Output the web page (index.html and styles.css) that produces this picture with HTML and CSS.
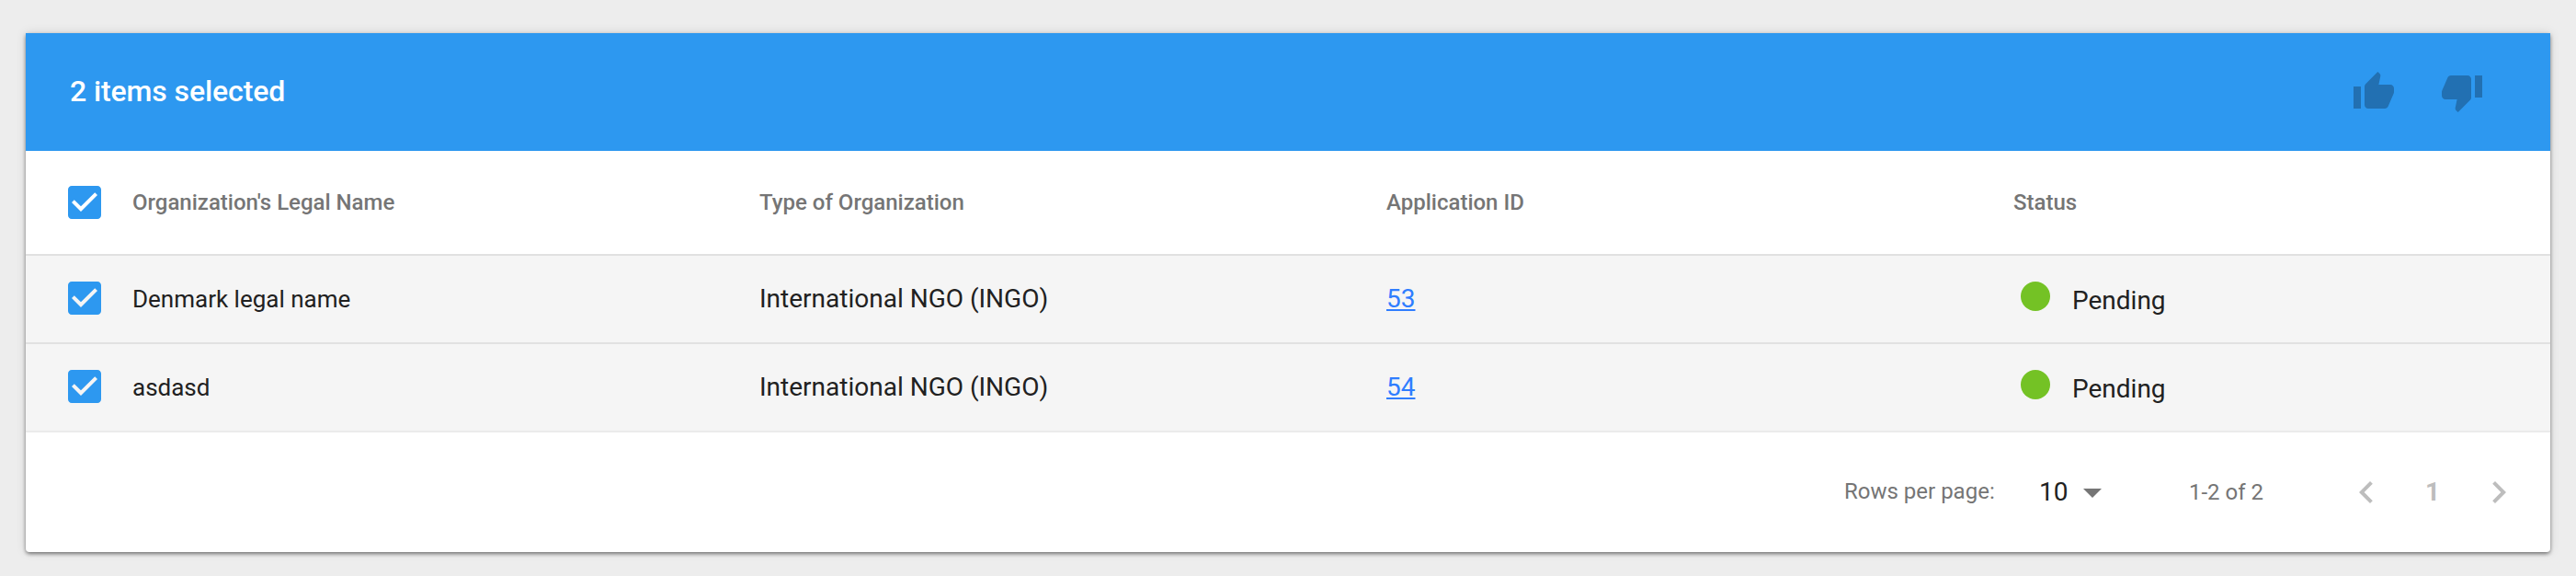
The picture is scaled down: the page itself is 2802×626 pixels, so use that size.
FILE: index.html
```html
<!DOCTYPE html>
<html lang="en">
<head>
<meta charset="utf-8">
<title>Applications</title>
<link rel="stylesheet" href="styles.css">
</head>
<body>
<svg class="defs" width="0" height="0">
  <symbol id="check" viewBox="0 0 24 24"><path d="M19 3H5c-1.11 0-2 .9-2 2v14c0 1.1.89 2 2 2h14c1.11 0 2-.9 2-2V5c0-1.1-.89-2-2-2zm-9 14l-5-5 1.41-1.41L10 14.17l7.59-7.59L19 8l-9 9z"/></symbol>
</svg>
<main class="card">
  <header class="toolbar">
    <h1 class="title">2 items selected</h1>
    <div class="actions">
      <svg class="icon" viewBox="0 0 24 24"><path d="M1 21h4V9H1v12zm22-11c0-1.1-.9-2-2-2h-6.31l.95-4.57.03-.32c0-.41-.17-.79-.44-1.06L14.17 1 7.59 7.59C7.22 7.95 7 8.45 7 9v10c0 1.1.9 2 2 2h9c.83 0 1.54-.5 1.84-1.22l3.02-7.05c.09-.23.14-.47.14-.73v-2z"/></svg>
      <svg class="icon" viewBox="0 0 24 24"><path d="M15 3H6c-.83 0-1.54.5-1.84 1.22l-3.02 7.05c-.09.23-.14.47-.14.73v2c0 1.1.9 2 2 2h6.31l-.95 4.57-.03.32c0 .41.17.79.44 1.06L9.83 23l6.59-6.59c.36-.36.58-.86.58-1.41V5c0-1.1-.9-2-2-2zm4 0v12h4V3h-4z"/></svg>
    </div>
  </header>
  <section class="table">
    <div class="row head">
      <div class="select"><svg class="icon check"><use href="#check"/></svg></div>
      <div class="cell">Organization's Legal Name</div>
      <div class="cell">Type of Organization</div>
      <div class="cell">Application ID</div>
      <div class="cell">Status</div>
    </div>
    <div class="row">
      <div class="select"><svg class="icon check"><use href="#check"/></svg></div>
      <div class="cell name">Denmark legal name</div>
      <div class="cell">International NGO (INGO)</div>
      <div class="cell"><a class="link" href="#">53</a></div>
      <div class="cell status"><span class="dot"></span><span class="label">Pending</span></div>
    </div>
    <div class="row last">
      <div class="select"><svg class="icon check"><use href="#check"/></svg></div>
      <div class="cell name">asdasd</div>
      <div class="cell">International NGO (INGO)</div>
      <div class="cell"><a class="link" href="#">54</a></div>
      <div class="cell status"><span class="dot"></span><span class="label">Pending</span></div>
    </div>
  </section>
  <footer class="footer">
    <span class="rows-label">Rows per page:</span>
    <span class="size">10</span>
    <svg class="icon caret" viewBox="0 0 24 24"><path d="M7 10l5 5 5-5z"/></svg>
    <span class="range">1-2 of 2</span>
    <svg class="icon nav" viewBox="0 0 24 24"><path d="M15.41 7.41L14 6l-6 6 6 6 1.41-1.41L10.83 12z"/></svg>
    <span class="page">1</span>
    <svg class="icon nav" viewBox="0 0 24 24"><path d="M10 6L8.59 7.41 13.17 12l-4.58 4.59L10 18l6-6z"/></svg>
  </footer>
</main>
</body>
</html>
```
FILE: styles.css
```css
* { box-sizing: border-box; }
body {
  margin: 0;
  padding: 36px 28px 26px;
  background: #ededed;
  font-family: Roboto, "Liberation Sans", sans-serif;
  color: #212121;
}
.defs { position: absolute; }
.card {
  height: 564px;
  background: #fff;
  border-radius: 0 0 4px 4px;
  box-shadow: 0 2px 4px -1px rgba(0,0,0,.4), 0 2px 4px rgba(0,0,0,.24), 0 0 12px rgba(0,0,0,.12);
}
.icon { width: 48px; height: 48px; flex: none; display: block; }
.toolbar {
  height: 128px;
  padding: 0 72px 0 48px;
  display: flex;
  align-items: center;
  justify-content: space-between;
  background: #2d98f0;
}
.title {
  margin: 0;
  padding-bottom: 2px;
  font-size: 32px;
  line-height: 40px;
  font-weight: 500;
  letter-spacing: -0.1px;
  color: #fff;
}
.actions { display: flex; gap: 48px; fill: #2270b2; }
.row {
  height: 96px;
  display: flex;
  align-items: center;
  background: #f5f5f5;
  border-bottom: 2px solid #e1e1e1;
  font-size: 28px;
  line-height: 32px;
}
.row.last { border-bottom-color: #ebebeb; }
.row.head {
  height: 114px;
  background: #fff;
  font-size: 24px;
  font-weight: 500;
  color: #757575;
}
.select { width: 116px; padding-left: 40px; flex: none; }
.row:not(.head) .select { padding-bottom: 2px; }
.check { fill: #2d98f0; }
.cell { width: 682px; flex: none; white-space: nowrap; }
.cell:last-child { width: auto; flex: 1; }
.name { font-size: 26px; }
.link { color: #2f7dff; text-decoration: underline; text-decoration-thickness: 2px; text-underline-offset: 2px; }
.status { display: flex; align-items: center; }
.dot { width: 32px; height: 32px; margin: 0 24px 6px 8px; border-radius: 50%; background: #74c225; }
.label { padding-top: 4px; }
.footer {
  height: 130px;
  padding-right: 32px;
  display: flex;
  align-items: center;
  justify-content: flex-end;
  font-size: 24px;
  line-height: 32px;
  color: #757575;
  white-space: nowrap;
}
.rows-label { width: 212px; padding-bottom: 2px; flex: none; }
.size { width: 34px; flex: none; font-size: 28px; color: #212121; }
.caret { fill: #757575; }
.range { width: 169px; margin-left: 81px; flex: none; }
.nav { fill: #bdbdbd; }
.page { width: 96px; padding-left: 40px; flex: none; font-size: 28px; font-weight: 700; color: #bdbdbd; }
```
